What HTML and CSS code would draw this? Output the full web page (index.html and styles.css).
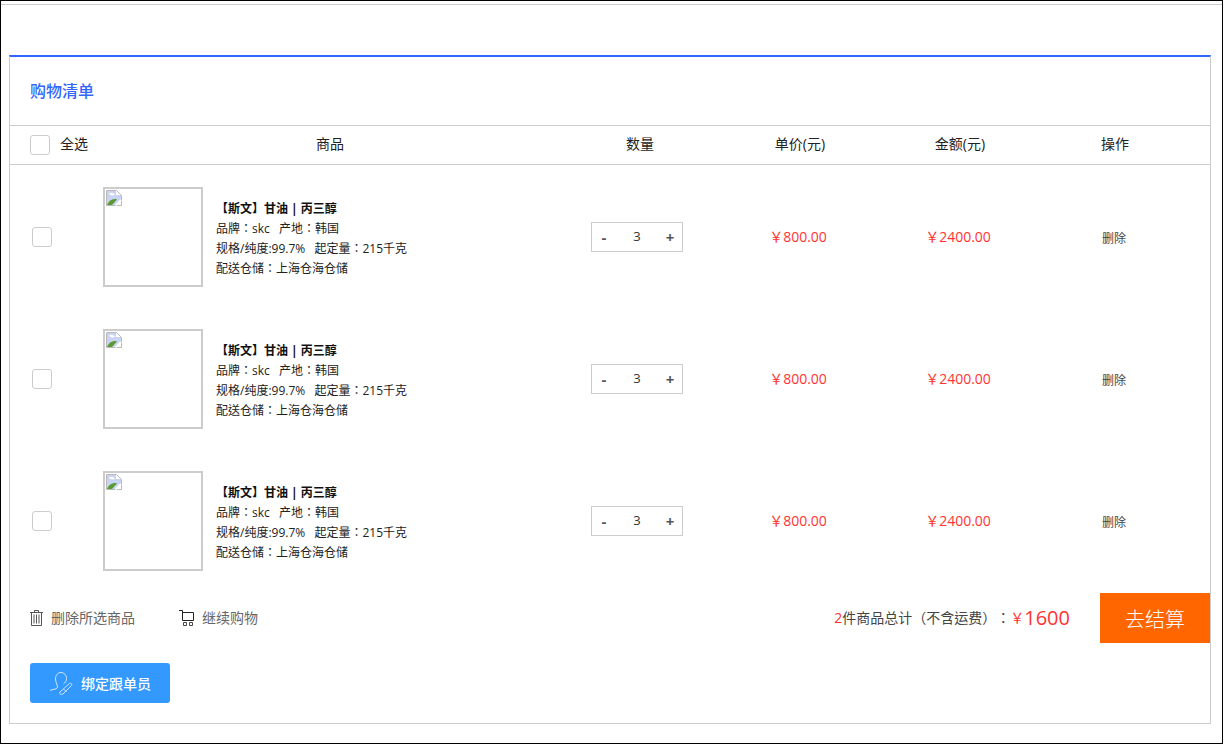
FILE: index.html
```html
<!doctype html>
<html>
<head>
<meta charset="utf-8">
<title>购物清单</title>
<link rel="stylesheet" href="styles.css">
</head>
<body>
<div class="frame">
  <div class="cart">
    <h2 class="cartTitle">购物清单</h2>
    <div class="listHead">
      <div class="selectAll"><span class="check big"></span>全选</div>
      <div>商品</div>
      <div>数量</div>
      <div>单价(元)</div>
      <div>金额(元)</div>
      <div>操作</div>
    </div>
    <ul class="goodsList">
      <li class="goodsRow">
        <div class="rowCheck"><span class="check"></span></div>
        <div class="goods">
          <div class="pic"><svg class="brokenImg" width="16" height="16" viewBox="0 0 16 16"><path d="M0.5 0.5H10.5L15.5 5.5V15.5H0.5Z" fill="#fff" stroke="#b9b9b9"/><path d="M1 1H10V5H15V10L9 15H1Z" fill="#c9d4f4"/><path d="M3 3.5C5 2 8 3 9 5C6 6 4 5.500 3 3.500Z" fill="#fff"/><path d="M1 15C3 10 7 8 11 9.500L6 15Z" fill="#5c9a35"/><path d="M15 10L9.500 15.500" stroke="#fff" stroke-width="2"/></svg></div>
          <div class="info">
            <p class="name">【斯文】甘油 | 丙三醇</p>
            <p>品牌：skc&nbsp; 产地：韩国</p>
            <p>规格/纯度:99.7%&nbsp; 起定量：215千克</p>
            <p>配送仓储：上海仓海仓储</p>
          </div>
        </div>
        <div class="qtyCell"><div class="qty"><span>-</span><em>3</em><span>+</span></div></div>
        <div class="price">￥800.00</div>
        <div class="price">￥2400.00</div>
        <div class="del">删除</div>
      </li>
      <li class="goodsRow">
        <div class="rowCheck"><span class="check"></span></div>
        <div class="goods">
          <div class="pic"><svg class="brokenImg" width="16" height="16" viewBox="0 0 16 16"><path d="M0.5 0.5H10.5L15.5 5.5V15.5H0.5Z" fill="#fff" stroke="#b9b9b9"/><path d="M1 1H10V5H15V10L9 15H1Z" fill="#c9d4f4"/><path d="M3 3.5C5 2 8 3 9 5C6 6 4 5.500 3 3.500Z" fill="#fff"/><path d="M1 15C3 10 7 8 11 9.500L6 15Z" fill="#5c9a35"/><path d="M15 10L9.500 15.500" stroke="#fff" stroke-width="2"/></svg></div>
          <div class="info">
            <p class="name">【斯文】甘油 | 丙三醇</p>
            <p>品牌：skc&nbsp; 产地：韩国</p>
            <p>规格/纯度:99.7%&nbsp; 起定量：215千克</p>
            <p>配送仓储：上海仓海仓储</p>
          </div>
        </div>
        <div class="qtyCell"><div class="qty"><span>-</span><em>3</em><span>+</span></div></div>
        <div class="price">￥800.00</div>
        <div class="price">￥2400.00</div>
        <div class="del">删除</div>
      </li>
      <li class="goodsRow">
        <div class="rowCheck"><span class="check"></span></div>
        <div class="goods">
          <div class="pic"><svg class="brokenImg" width="16" height="16" viewBox="0 0 16 16"><path d="M0.5 0.5H10.5L15.5 5.5V15.5H0.5Z" fill="#fff" stroke="#b9b9b9"/><path d="M1 1H10V5H15V10L9 15H1Z" fill="#c9d4f4"/><path d="M3 3.5C5 2 8 3 9 5C6 6 4 5.500 3 3.500Z" fill="#fff"/><path d="M1 15C3 10 7 8 11 9.500L6 15Z" fill="#5c9a35"/><path d="M15 10L9.500 15.500" stroke="#fff" stroke-width="2"/></svg></div>
          <div class="info">
            <p class="name">【斯文】甘油 | 丙三醇</p>
            <p>品牌：skc&nbsp; 产地：韩国</p>
            <p>规格/纯度:99.7%&nbsp; 起定量：215千克</p>
            <p>配送仓储：上海仓海仓储</p>
          </div>
        </div>
        <div class="qtyCell"><div class="qty"><span>-</span><em>3</em><span>+</span></div></div>
        <div class="price">￥800.00</div>
        <div class="price">￥2400.00</div>
        <div class="del">删除</div>
      </li>
    </ul>
    <div class="cartFoot">
      <div class="footLinks">
        <a class="footLink">
          <svg width="13" height="16" viewBox="0 0 13 16" fill="none" stroke="#555"><path d="M0 2.500H13M4.500 2.500V0.500H8.500V2.500M1.500 2.500V15.500H11.500V2.500M4 4.500V13.500M6.500 4.500V13.500M9 4.500V13.500"/></svg>
          删除所选商品
        </a>
        <a class="footLink">
          <svg width="15" height="16" viewBox="0 0 15 16" fill="none" stroke="#222"><path d="M0 0.500H3.500V10.500H14.500V2.500H3.500"/><path d="M4.500 12.500H7.500V15.500H4.500ZM10.500 12.500H13.500V15.500H10.500Z" stroke="#444"/></svg>
          继续购物
        </a>
      </div>
      <div class="total">
        <span class="red">2</span>件商品总计（不含运费）：<span class="red">￥</span><span class="red sum">1600</span>
      </div>
      <button class="payBtn" type="button">去结算</button>
    </div>
    <button class="bindBtn" type="button">
      <svg width="24" height="24" viewBox="0 0 24 24" fill="none" stroke="#dcecff" stroke-width="0.9"><path d="M1 19.500C3 18 7 19 8.500 16.500C9 14.500 6.500 12 6.500 8C6.500 4 9 1.500 12 1.500C15 1.500 17.500 4 17.500 7.500C17.500 10 16 12 14.500 13"/><path d="M11 21L20.500 12.500C22 11.500 23.500 13.500 22.500 14.500L14 23C12 24 10 23 11 21Z"/><path d="M14.500 18L17.500 21"/></svg>
      绑定跟单员
    </button>
  </div>
</div>
</body>
</html>
```

FILE: styles.css
```css
*{ margin:0; padding:0; box-sizing:border-box}
ul{ list-style:none}
body{ font-family:"Open Sans","Noto Sans CJK SC",sans-serif; font-size:14px; color:#333; background:#fff; text-spacing-trim:space-all}
em{ font-style:normal}
button{ font-family:inherit; border:0; cursor:pointer}

.frame{ width:1223px; height:744px; border:1px solid #000; padding-top:3px}
.frame::before{ content:""; display:block; height:1px; background:#ccc}
.cart{ width:1202px; height:669px; margin:50px 0 0 8px; border:1px solid #ccc; border-top:2px solid #3366ff}

.cartTitle{ height:68px; padding-left:20px; font-size:16px; line-height:68px; font-weight:500; color:#3366ff}

.listHead,.goodsRow{ display:grid; grid-template-columns:80px 480px 140px 180px 140px 170px; align-items:center}
.listHead{ height:40px; border-top:1px solid #ccc; border-bottom:1px solid #ccc; color:#222; font-size:14px; text-align:center; line-height:20px; padding-bottom:2px}
.selectAll{ display:flex; align-items:center; gap:10px; padding-left:20px}

.check{ display:block; width:20px; height:20px; border:1px solid #ccc; border-radius:3px}
.selectAll .check{ margin-top:2px}
.rowCheck{ padding-left:22px}

.goodsList{ padding-top:1px}
.goodsRow{ height:142px}
.goods{ display:flex; align-items:center; gap:13px; padding-left:13px}
.pic{ width:100px; height:100px; border:2px solid #ccc; padding:1px}
.brokenImg{ display:block}
.info{ font-family:"Open Sans","Noto Sans CJK TC",sans-serif; font-size:12px; line-height:20px; color:#222; padding-top:3px; word-spacing:1.5px}
.info .name{ font-weight:bold; color:#111; word-spacing:0}

.qtyCell{ padding-left:21px}
.qty{ display:flex; justify-content:space-between; align-items:center; width:92px; height:30px; border:1px solid #ccc; padding:0 7px; font-size:13px; color:#333}
.qty em{ padding-bottom:2px}
.qty span{ width:10px; text-align:center; font-size:15px; font-weight:bold; color:#555}

.price{ color:#ff3333; font-size:14px; text-align:center; padding:0 4px 2px 0}
.del{ font-size:12px; color:#444; text-align:center; padding:2px 2px 0 0}

.cartFoot{ display:flex; align-items:center; height:50px; margin-top:1px}
.footLinks{ display:flex; gap:44px; padding-left:20px; flex:1}
.footLink{ display:flex; align-items:center; gap:8px; font-size:14px; line-height:16px; color:#666}
.total{ font-family:"Open Sans","Noto Sans CJK TC",sans-serif; font-size:14px; color:#444; display:flex; align-items:center; margin-right:30px; padding-bottom:2px}
.red{ color:#ff3333}
.sum{ font-size:20px}
.payBtn{ width:110px; height:50px; background:#ff6600; color:#fff; font-size:20px; font-weight:300}

.bindBtn{ display:flex; align-items:center; gap:8px; width:140px; height:40px; margin:20px 0 0 20px; padding-left:19px; background:#3399ff; border-radius:3px; color:#fff; font-size:14px; font-weight:500}
```
